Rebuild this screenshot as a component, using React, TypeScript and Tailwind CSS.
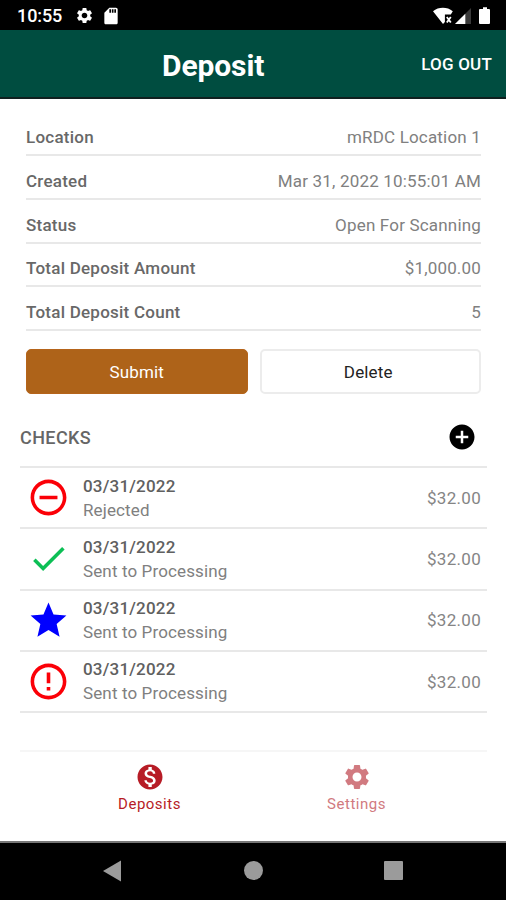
import React from 'react';
import {
  MdAddCircle,
  MdCheck,
  MdErrorOutline,
  MdMonetizationOn,
  MdRemoveCircleOutline,
  MdSdCard,
  MdSettings,
  MdStar,
} from 'react-icons/md';

interface Check {
  date: string;
  status: string;
  amount: string;
  icon: React.ReactNode;
}

const details = [
  { label: 'Location', value: 'mRDC Location 1' },
  { label: 'Created', value: 'Mar 31, 2022 10:55:01 AM' },
  { label: 'Status', value: 'Open For Scanning' },
  { label: 'Total Deposit Amount', value: '$1,000.00' },
  { label: 'Total Deposit Count', value: '5' },
];

const checks: Check[] = [
  { date: '03/31/2022', status: 'Rejected', amount: '$32.00', icon: <MdRemoveCircleOutline className="text-[#fb0007]" /> },
  { date: '03/31/2022', status: 'Sent to Processing', amount: '$32.00', icon: <MdCheck className="text-[#0cbf55]" /> },
  { date: '03/31/2022', status: 'Sent to Processing', amount: '$32.00', icon: <MdStar className="text-[#0000ff]" /> },
  { date: '03/31/2022', status: 'Sent to Processing', amount: '$32.00', icon: <MdErrorOutline className="text-[#fb0007]" /> },
];

const StatusBar = () => (
  <div className="flex h-[30px] items-center bg-black pl-[17px] pr-[15px] pt-[2px] text-white">
    <span className="w-[58px] text-[18px] font-medium leading-none tracking-[-0.1px]">10:55</span>
    <MdSettings className="-mt-px size-[19px]" />
    <MdSdCard className="-mt-px ml-[7px] size-[20px]" />
    <svg className="-mt-px ml-auto" width="58" height="18" viewBox="0 0 58 18">
      {/* wifi without connection */}
      <path d="M0 4.2C5.6-.3 14.2-.3 19.8 4.2L17.8 7.4H11.9V14.9L10 17Z" fill="#fff" />
      <path d="M13.8 10l4 5.5M17.8 10l-4 5.5" stroke="#fff" strokeWidth="1.8" />
      {/* mobile signal */}
      <path d="M38 1v16H22Z" fill="#3a3a3a" />
      <path d="M32.3 6.7V17H22Z" fill="#fff" />
      {/* battery */}
      <path d="M47.5 2h2.5V.3h4V2h2q1 0 1 1v13q0 1-1 1h-9q-1 0-1-1V3q0-1 1-1Z" fill="#fff" />
    </svg>
  </div>
);

const Header = () => (
  <header className="flex h-[69px] items-center justify-between border-b-2 border-[#10201f] bg-[#004d40] pl-[162px] pr-[14px] pt-[3px] text-white">
    <h1 className="pt-[2px] text-[30px] font-bold leading-none tracking-[-0.1px]">Deposit</h1>
    <button className="text-[17px] font-medium tracking-[0.2px]">LOG OUT</button>
  </header>
);

const CheckRow: React.FC<{ check: Check }> = ({ check }) => (
  <li className="flex h-[61.3px] items-center border-b-2 border-[#e8e8e8] pl-[7px] pr-[6px]">
    <span className="flex w-[56px] text-[43px]">{check.icon}</span>
    <div className="flex-1 text-[17px] leading-[24px]">
      <p className="font-medium tracking-[0.2px] text-[#606060]">{check.date}</p>
      <p className="tracking-[0.13px] text-[#808080]">{check.status}</p>
    </div>
    <span className="pt-[2px] text-[17px] tracking-[0.3px] text-[#858585]">{check.amount}</span>
  </li>
);

export default function App() {
  return (
    <div className="flex h-[900px] w-[506px] flex-col overflow-hidden bg-white font-[Roboto,sans-serif]">
      <StatusBar />
      <Header />

      <main className="flex-1 pl-5 pr-[19px]">
        <dl className="px-[6px] pt-[13.8px]">
          {details.map(({ label, value }) => (
            <div
              key={label}
              className="flex h-[43.6px] items-end justify-between border-b-2 border-[#e8e8e8] pb-[5px] text-[17px] leading-[24px]"
            >
              <dt className="font-medium tracking-[0.24px] text-[#686868]">{label}</dt>
              <dd className="tracking-[0.18px] text-[#808080]">{value}</dd>
            </div>
          ))}
        </dl>

        <div className="mt-[18.5px] grid grid-cols-2 gap-3 px-[6px] text-[17px] tracking-[0.15px]">
          <button className="h-[45px] rounded-[5px] border border-[#b5641a] bg-[#ae6319] pt-[2px] text-white">Submit</button>
          <button className="h-[45px] rounded-[5px] border-2 border-[#ececec] pr-[4px] pt-[2px] text-[#222]">Delete</button>
        </div>

        <div className="mt-[27.5px] flex h-[30px] items-center justify-between pr-[10px]">
          <h2 className="pt-px text-[18px] font-medium tracking-[0.4px] text-[#666]">CHECKS</h2>
          <MdAddCircle className="size-[30px] text-black" />
        </div>

        <ul className="mt-[14.2px] border-t-2 border-[#e8e8e8]">
          {checks.map((check, index) => (
            <CheckRow key={index} check={check} />
          ))}
        </ul>
      </main>

      <nav className="ml-[20px] mr-[19px] flex h-[91px] border-t-2 border-[#f6f6f6] pl-[26px] pt-[10px] text-[15px] leading-[24px] tracking-[0.5px]">
        <button className="flex w-[207px] flex-col items-center justify-start text-[#b71c26]">
          <MdMonetizationOn className="size-[30px]" />
          Deposits
        </button>
        <button className="flex w-[207px] flex-col items-center justify-start text-[#d17a80]">
          <MdSettings className="size-[30px]" />
          Settings
        </button>
      </nav>

      <footer className="flex h-[59px] items-center border-t-2 border-[#777] bg-black pb-[2px] pl-[103px] text-[#9b9b9b]">
        <svg width="19" height="22" viewBox="0 0 19 22" fill="currentColor">
          <path d="M0 11 18 .5v21Z" />
        </svg>
        <span className="ml-[122px] size-[19px] rounded-full bg-current" />
        <span className="ml-[121px] size-[19px] rounded-[1px] bg-current" />
      </footer>
    </div>
  );
}
